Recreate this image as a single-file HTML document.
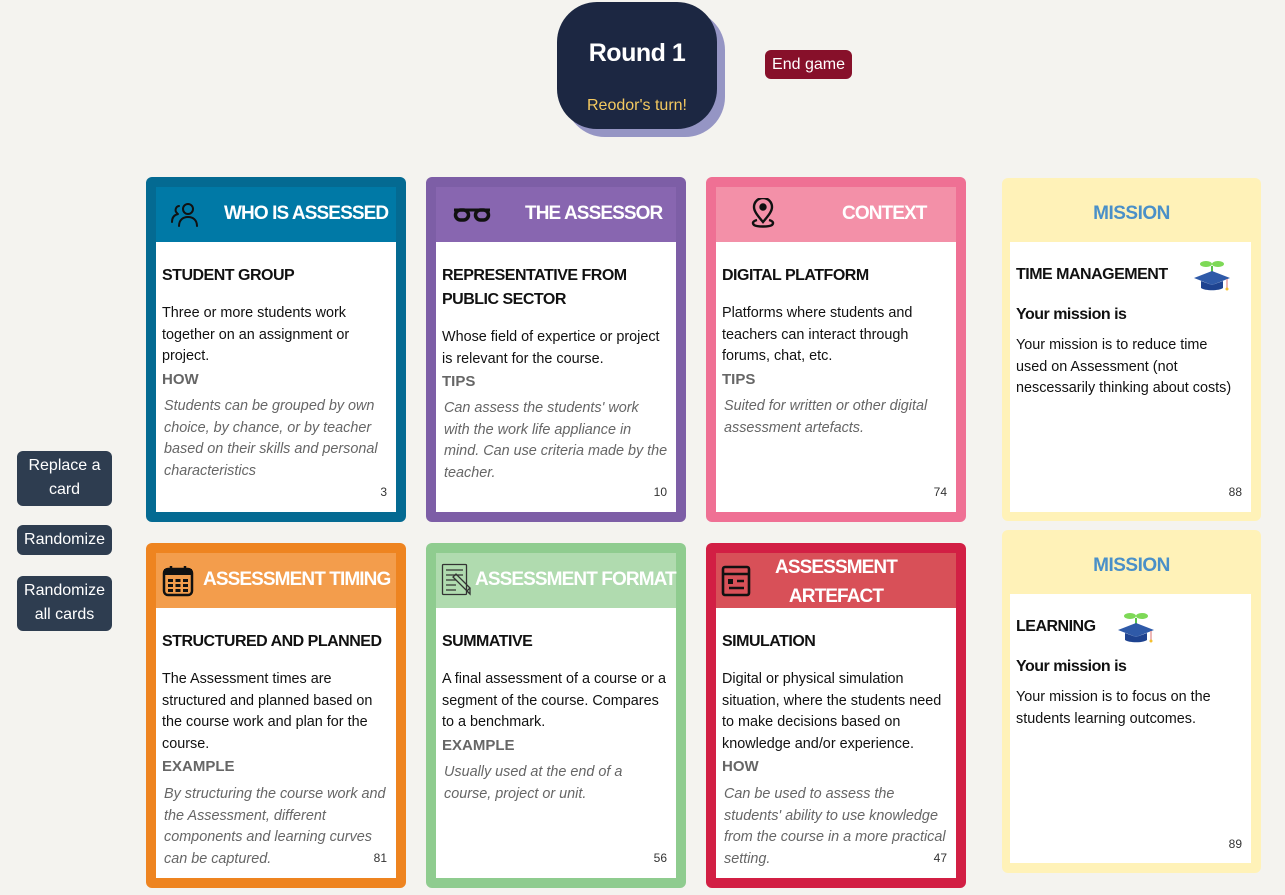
<!DOCTYPE html>
<html><head><meta charset="utf-8"><style>
*{box-sizing:border-box;margin:0;padding:0}
body{width:1285px;height:895px;background:#f4f3ef;font-family:"Liberation Sans",sans-serif;position:relative;overflow:hidden;color:#111}
.a{position:absolute}
.card{position:absolute;width:260px;height:345px;border-radius:6px}
.hd{position:absolute;left:10px;top:10px;width:240px;height:55px}
.wh{position:absolute;left:10px;top:65px;width:240px;height:270px;background:#fff}
.ht{position:absolute;color:#fff;font-weight:bold;font-size:19px;letter-spacing:-0.9px;white-space:nowrap}
.t{position:absolute;left:6px;font-weight:bold;font-size:16px;letter-spacing:-0.5px;line-height:24px;white-space:nowrap}
.p{position:absolute;left:6px;width:236px;font-size:14.4px;line-height:21.6px;white-space:nowrap}
.h{position:absolute;left:6px;font-weight:bold;font-size:15px;color:#666;line-height:20px}
.i{position:absolute;left:8px;width:232px;font-size:14.4px;font-style:italic;color:#666;line-height:21.6px;white-space:nowrap}
.n{position:absolute;right:9px;font-size:12px;color:#333}
.btn{position:absolute;left:17px;width:95px;background:#2e3d50;color:#fff;border-radius:6px;text-align:center;font-size:16px;line-height:24px}
.m{position:absolute;left:1002px;width:259px;background:#fff2b8;border-radius:6px}
.mw{position:absolute;left:8px;width:241px;background:#fff}
.mh{position:absolute;left:0;width:259px;text-align:center;color:#4a90c8;font-weight:bold;font-size:19px;letter-spacing:-0.5px}
</style></head><body>

<div class="a" style="left:565px;top:10px;width:160px;height:127px;border-radius:40px;background:#9595c4"></div>
<div class="a" style="left:557px;top:2px;width:160px;height:127px;border-radius:40px;background:#1c2742;text-align:center">
 <div style="color:#fff;font-weight:bold;font-size:25px;letter-spacing:-0.5px;margin-top:37px">Round 1</div>
 <div style="color:#f4c960;font-size:16px;margin-top:29px">Reodor's turn!</div>
</div>
<div class="a" style="left:765px;top:50px;width:87px;height:29px;border-radius:6px;background:#87102a;color:#fff;font-size:16px;text-align:center;line-height:29px">End game</div>

<div class="btn" style="top:451px;height:55px;padding-top:3px">Replace a card</div>
<div class="btn" style="top:525px;height:30px;line-height:30px">Randomize</div>
<div class="btn" style="top:576px;height:55px;padding-top:3px">Randomize all cards</div>

<!-- Card 1 -->
<div class="card" style="left:146px;top:177px;background:#046a92">
 <div class="hd" style="background:#0079a6">
  <svg class="a" style="left:13px;top:14px" width="32" height="28" viewBox="0 0 32 28" fill="none" stroke="#111" stroke-width="2" stroke-linecap="round"><circle cx="19" cy="8" r="5"/><path d="M10 25c0-6 4-9 9-9s9 3 9 9"/><path d="M10 5a4 4 0 0 0-2 7M3 21c0-4 2-7 6-8"/></svg>
  <div class="ht" style="left:68px;top:16px">WHO IS ASSESSED</div>
 </div>
 <div class="wh">
  <div class="t" style="top:22px">STUDENT GROUP</div>
  <div class="p" style="top:61px">Three or more students work<br>together on an assignment or<br>project.</div>
  <div class="h" style="top:128px">HOW</div>
  <div class="i" style="top:154px">Students can be grouped by own<br>choice, by chance, or by teacher<br>based on their skills and personal<br>characteristics</div>
  <div class="n" style="top:243px">3</div>
 </div>
</div>

<!-- Card 2 -->
<div class="card" style="left:426px;top:177px;background:#7d5ea6">
 <div class="hd" style="background:#8866b0">
  <svg class="a" style="left:17px;top:20px" width="38" height="16" viewBox="0 0 38 16"><path d="M1 3h36" stroke="#111" stroke-width="3"/><rect x="2.5" y="3" width="13" height="10" rx="5" fill="none" stroke="#111" stroke-width="3.5"/><rect x="22.5" y="3" width="13" height="10" rx="5" fill="none" stroke="#111" stroke-width="3.5"/></svg>
  <div class="ht" style="left:89px;top:16px">THE ASSESSOR</div>
 </div>
 <div class="wh">
  <div class="t" style="top:22px">REPRESENTATIVE FROM<br>PUBLIC SECTOR</div>
  <div class="p" style="top:85px">Whose field of expertice or project<br>is relevant for the course.</div>
  <div class="h" style="top:130px">TIPS</div>
  <div class="i" style="top:156px">Can assess the students' work<br>with the work life appliance in<br>mind. Can use criteria made by the<br>teacher.</div>
  <div class="n" style="top:243px">10</div>
 </div>
</div>

<!-- Card 3 -->
<div class="card" style="left:706px;top:177px;background:#ef7094">
 <div class="hd" style="background:#f390a8">
  <svg class="a" style="left:33px;top:11px" width="28" height="32" viewBox="0 0 28 32" fill="none" stroke="#111" stroke-width="2.4"><path d="M14 24c-6-7-9-11-9-15a9 9 0 0 1 18 0c0 4-3 8-9 15z"/><circle cx="14" cy="9" r="2.5" fill="#111"/><path d="M8 22c-4 1-5 3-3 5 3 2 15 2 18 0 2-2 1-4-3-5"/></svg>
  <div class="ht" style="left:126px;top:16px">CONTEXT</div>
 </div>
 <div class="wh">
  <div class="t" style="top:22px">DIGITAL PLATFORM</div>
  <div class="p" style="top:61px">Platforms where students and<br>teachers can interact through<br>forums, chat, etc.</div>
  <div class="h" style="top:128px">TIPS</div>
  <div class="i" style="top:154px">Suited for written or other digital<br>assessment artefacts.</div>
  <div class="n" style="top:243px">74</div>
 </div>
</div>

<!-- Card 4 -->
<div class="card" style="left:146px;top:543px;background:#ee8420">
 <div class="hd" style="background:#f39d4c">
  <svg class="a" style="left:6px;top:11px" width="32" height="33" viewBox="0 0 32 33"><rect x="2" y="5" width="28" height="26" rx="4" fill="none" stroke="#111" stroke-width="2.5"/><rect x="2" y="5" width="28" height="6" fill="#111"/><path d="M9 2v6M23 2v6" stroke="#111" stroke-width="2.5"/><g fill="#111"><rect x="6" y="15" width="5" height="3"/><rect x="13.5" y="15" width="5" height="3"/><rect x="21" y="15" width="5" height="3"/><rect x="6" y="20" width="5" height="3"/><rect x="13.5" y="20" width="5" height="3"/><rect x="21" y="20" width="5" height="3"/><rect x="6" y="25" width="5" height="3"/><rect x="13.5" y="25" width="5" height="3"/><rect x="21" y="25" width="5" height="3"/></g></svg>
  <div class="ht" style="left:47px;top:16px">ASSESSMENT TIMING</div>
 </div>
 <div class="wh">
  <div class="t" style="top:22px">STRUCTURED AND PLANNED</div>
  <div class="p" style="top:61px">The Assessment times are<br>structured and planned based on<br>the course work and plan for the<br>course.</div>
  <div class="h" style="top:149px">EXAMPLE</div>
  <div class="i" style="top:176px">By structuring the course work and<br>the Assessment, different<br>components and learning curves<br>can be captured.</div>
  <div class="n" style="top:243px">81</div>
 </div>
</div>

<!-- Card 5 -->
<div class="card" style="left:426px;top:543px;background:#8fcc8f">
 <div class="hd" style="background:#b0dbaf">
  <svg class="a" style="left:5px;top:10px" width="32" height="34" viewBox="0 0 32 34" fill="none" stroke="#333" stroke-width="1.3"><rect x="1.5" y="1.5" width="24" height="30" rx="1"/><path d="M5 7h17M5 12h17M5 17h10M5 22h10M5 27h10"/><path d="M12 14l14 14 3-3-14-14z"/><path d="M26 28l3 3 0-6"/></svg>
  <div class="ht" style="left:39px;top:16px">ASSESSMENT FORMAT</div>
 </div>
 <div class="wh">
  <div class="t" style="top:22px">SUMMATIVE</div>
  <div class="p" style="top:61px">A final assessment of a course or a<br>segment of the course. Compares<br>to a benchmark.</div>
  <div class="h" style="top:128px">EXAMPLE</div>
  <div class="i" style="top:154px">Usually used at the end of a<br>course, project or unit.</div>
  <div class="n" style="top:243px">56</div>
 </div>
</div>

<!-- Card 6 -->
<div class="card" style="left:706px;top:543px;background:#d21f44">
 <div class="hd" style="background:#d85058">
  <svg class="a" style="left:5px;top:12px" width="30" height="32" viewBox="0 0 30 32" fill="none" stroke="#111" stroke-width="2.6"><rect x="2" y="2" width="26" height="28" rx="2"/><path d="M2 9h26M16 16h7M8 23h15"/><rect x="7" y="14" width="5" height="5" fill="#111" stroke="none"/></svg>
  <div class="ht" style="left:0;width:240px;text-align:center;top:0;line-height:29px;font-size:19px">ASSESSMENT<br>ARTEFACT</div>
 </div>
 <div class="wh">
  <div class="t" style="top:22px">SIMULATION</div>
  <div class="p" style="top:61px">Digital or physical simulation<br>situation, where the students need<br>to make decisions based on<br>knowledge and/or experience.</div>
  <div class="h" style="top:149px">HOW</div>
  <div class="i" style="top:176px">Can be used to assess the<br>students' ability to use knowledge<br>from the course in a more practical<br>setting.</div>
  <div class="n" style="top:243px">47</div>
 </div>
</div>

<!-- Missions -->
<div class="m" style="top:178px;height:343px">
 <div class="mh" style="top:25px">MISSION</div>
 <div class="mw" style="top:64px;height:270px">
  <div class="t" style="top:21px">TIME MANAGEMENT</div>
  <svg class="a" style="left:183px;top:18px" width="38" height="32" viewBox="0 0 38 32"><path d="M19 12V6" stroke="#5bbf4a" stroke-width="2"/><ellipse cx="13" cy="4" rx="6" ry="3" fill="#7ed957"/><ellipse cx="25" cy="4" rx="6" ry="3" fill="#7ed957"/><path d="M1 18l18-7 18 7-18 7z" fill="#2f5aa8"/><path d="M8 21v7c4 3 18 3 22 0v-7l-11 4z" fill="#1e4390"/><path d="M34 19v9" stroke="#e8a0a0" stroke-width="1.5"/><circle cx="34" cy="29" r="1.5" fill="#f4c030"/></svg>
  <div class="t" style="top:61px;font-size:16px">Your mission is</div>
  <div class="p" style="top:93px">Your mission is to reduce time<br>used on Assessment (not<br>nescessarily thinking about costs)</div>
  <div class="n" style="top:243px">88</div>
 </div>
</div>
<div class="m" style="top:530px;height:343px">
 <div class="mh" style="top:25px">MISSION</div>
 <div class="mw" style="top:64px;height:269px">
  <div class="t" style="top:21px">LEARNING</div>
  <svg class="a" style="left:107px;top:18px" width="38" height="32" viewBox="0 0 38 32"><path d="M19 12V6" stroke="#5bbf4a" stroke-width="2"/><ellipse cx="13" cy="4" rx="6" ry="3" fill="#7ed957"/><ellipse cx="25" cy="4" rx="6" ry="3" fill="#7ed957"/><path d="M1 18l18-7 18 7-18 7z" fill="#2f5aa8"/><path d="M8 21v7c4 3 18 3 22 0v-7l-11 4z" fill="#1e4390"/><path d="M34 19v9" stroke="#e8a0a0" stroke-width="1.5"/><circle cx="34" cy="29" r="1.5" fill="#f4c030"/></svg>
  <div class="t" style="top:61px;font-size:16px">Your mission is</div>
  <div class="p" style="top:93px">Your mission is to focus on the<br>students learning outcomes.</div>
  <div class="n" style="top:243px">89</div>
 </div>
</div>
</body></html>
